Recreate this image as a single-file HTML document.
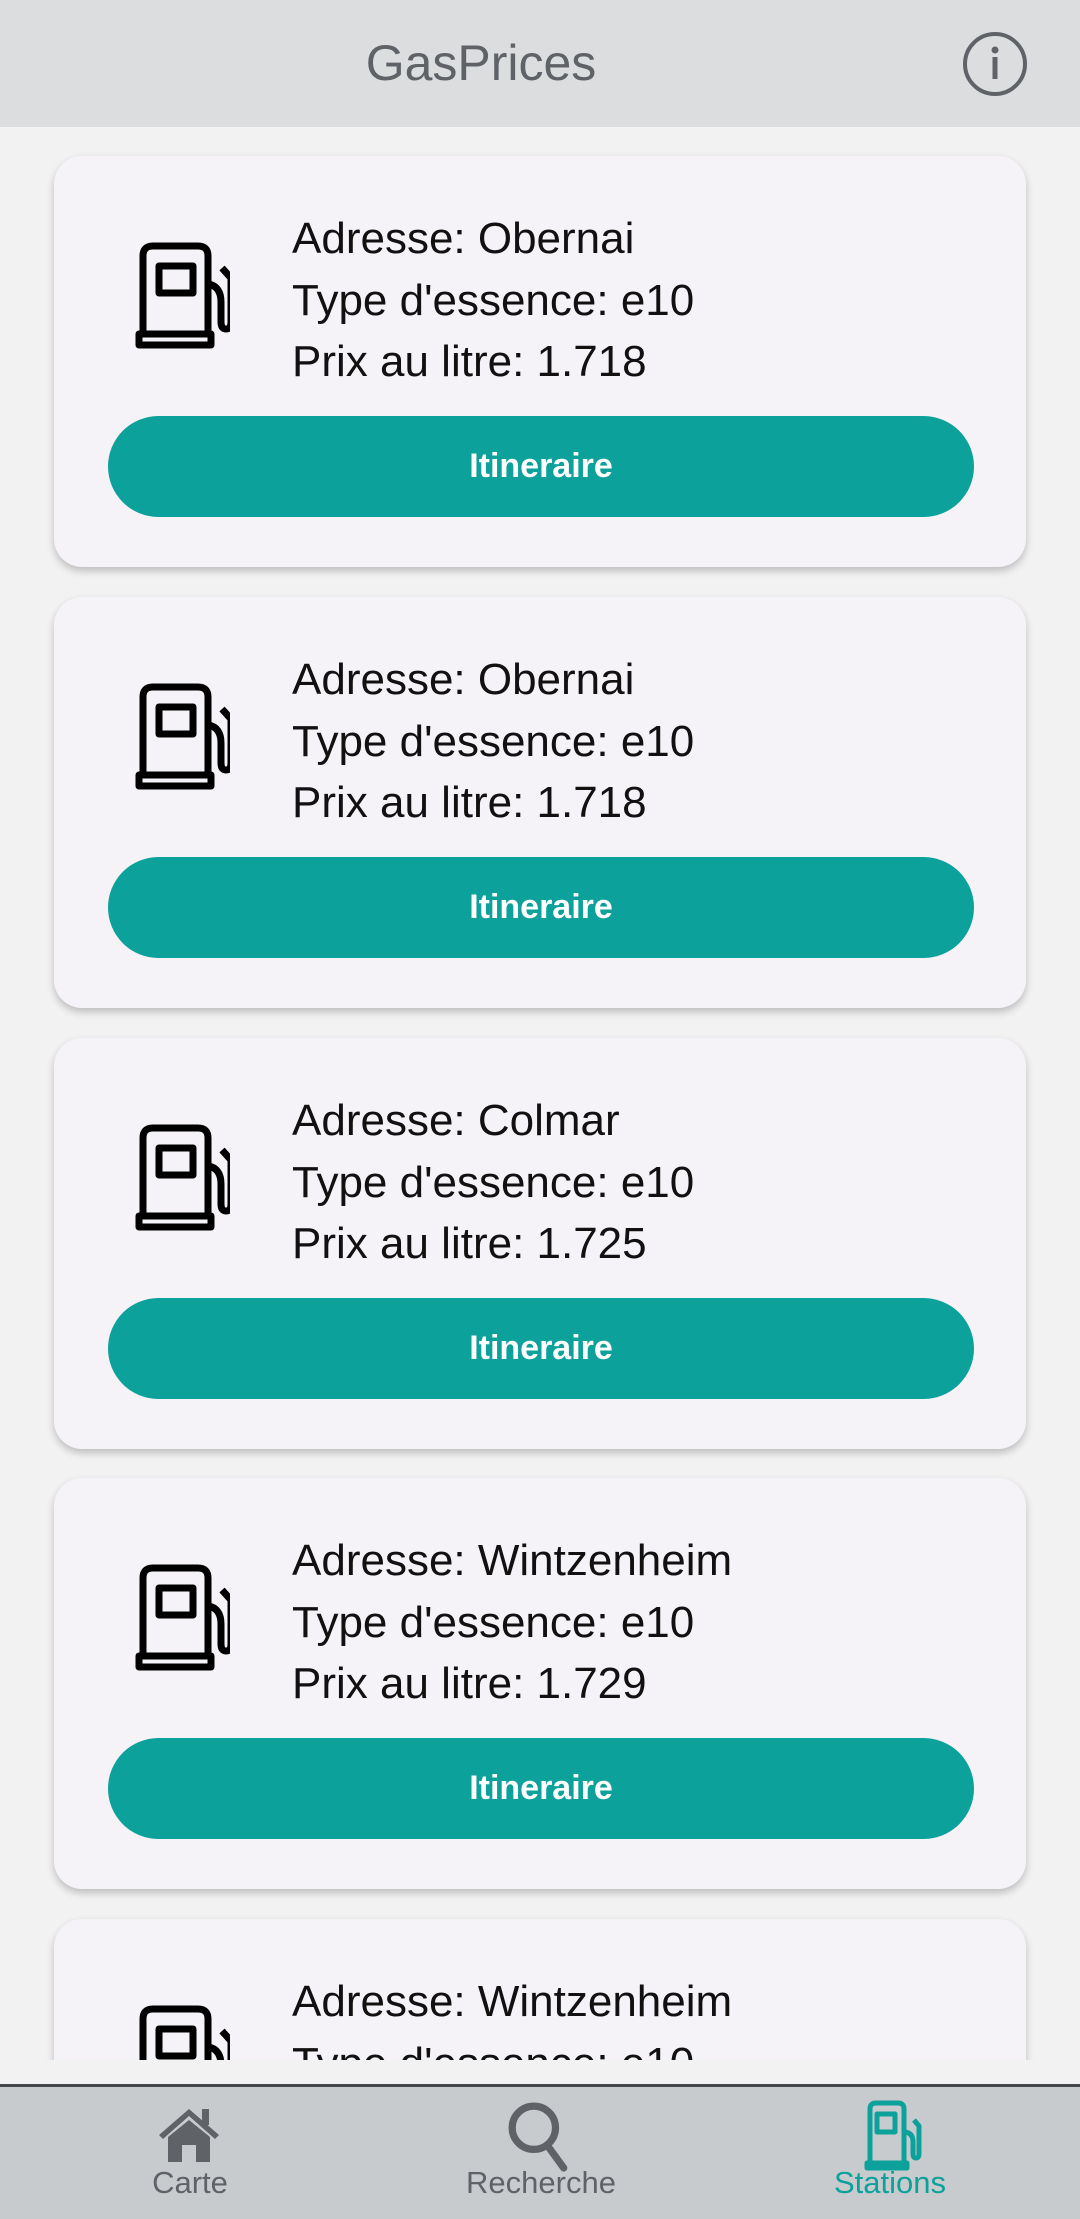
<!DOCTYPE html>
<html><head><meta charset="utf-8"><style>
*{margin:0;padding:0;box-sizing:border-box}
html,body{width:1080px;height:2219px;overflow:hidden}
body{background:#f2f2f2;font-family:"Liberation Sans",Roboto,sans-serif;position:relative}
.hdr{position:absolute;left:0;top:0;width:1080px;height:127px;background:#dcdddf}
.title{position:absolute;left:0;width:962px;text-align:center;top:34px;font-size:50px;color:#5f6368}
.list{position:absolute;left:0;top:127px;width:1080px;height:1933px;overflow:hidden}
.card{position:absolute;left:54px;width:972px;height:411px;background:#f6f3f8;border-radius:28px;box-shadow:0 4px 8px rgba(0,0,0,.22)}
.card svg{position:absolute;left:66px;top:74px}
.txt{position:absolute;left:238px;top:52px;font-size:44px;line-height:61.5px;color:#111}
.btn{position:absolute;left:54px;top:260px;width:866px;height:101px;background:#0ca19a;border-radius:51px;color:#fff;font-weight:bold;font-size:34px;text-align:center;line-height:101px}
.nav{position:absolute;left:0;top:2084px;width:1080px;height:135px;background:#c8cbce;border-top:3px solid #44484c;overflow:hidden}
.lab{position:absolute;top:78px;font-size:31px;color:#5f6368;width:300px;text-align:center}
</style></head><body>
<div class="hdr"><div class="title">GasPrices</div>
<svg style="position:absolute;left:962px;top:31px" width="66" height="66" viewBox="0 0 66 66"><circle cx="33" cy="33" r="30" fill="none" stroke="#5f6368" stroke-width="4"/><circle cx="33" cy="19" r="3.5" fill="#5f6368"/><rect x="30.5" y="26" width="5" height="22" fill="#5f6368"/></svg></div>
<div class="list">
<div class="card" style="top:29px"><svg width="110" height="120" viewBox="0 0 110 120"><g fill="none" stroke="#000" stroke-width="7" stroke-linejoin="round"><path d="M23 102V26q0-10 10-10h45q10 0 10 10v76"/><path d="M19 104h72v11H19z"/><rect x="39" y="36" width="34" height="27"/><path d="M88 54q13 2 13 18v20q0 7 5 7t5-7V48l-9-10"/></g></svg><div class="txt">Adresse: Obernai<br>Type d'essence: e10<br>Prix au litre: 1.718</div><div class="btn">Itineraire</div></div>
<div class="card" style="top:470px"><svg width="110" height="120" viewBox="0 0 110 120"><g fill="none" stroke="#000" stroke-width="7" stroke-linejoin="round"><path d="M23 102V26q0-10 10-10h45q10 0 10 10v76"/><path d="M19 104h72v11H19z"/><rect x="39" y="36" width="34" height="27"/><path d="M88 54q13 2 13 18v20q0 7 5 7t5-7V48l-9-10"/></g></svg><div class="txt">Adresse: Obernai<br>Type d'essence: e10<br>Prix au litre: 1.718</div><div class="btn">Itineraire</div></div>
<div class="card" style="top:911px"><svg width="110" height="120" viewBox="0 0 110 120"><g fill="none" stroke="#000" stroke-width="7" stroke-linejoin="round"><path d="M23 102V26q0-10 10-10h45q10 0 10 10v76"/><path d="M19 104h72v11H19z"/><rect x="39" y="36" width="34" height="27"/><path d="M88 54q13 2 13 18v20q0 7 5 7t5-7V48l-9-10"/></g></svg><div class="txt">Adresse: Colmar<br>Type d'essence: e10<br>Prix au litre: 1.725</div><div class="btn">Itineraire</div></div>
<div class="card" style="top:1351px"><svg width="110" height="120" viewBox="0 0 110 120"><g fill="none" stroke="#000" stroke-width="7" stroke-linejoin="round"><path d="M23 102V26q0-10 10-10h45q10 0 10 10v76"/><path d="M19 104h72v11H19z"/><rect x="39" y="36" width="34" height="27"/><path d="M88 54q13 2 13 18v20q0 7 5 7t5-7V48l-9-10"/></g></svg><div class="txt">Adresse: Wintzenheim<br>Type d'essence: e10<br>Prix au litre: 1.729</div><div class="btn">Itineraire</div></div>
<div class="card" style="top:1792px"><svg width="110" height="120" viewBox="0 0 110 120"><g fill="none" stroke="#000" stroke-width="7" stroke-linejoin="round"><path d="M23 102V26q0-10 10-10h45q10 0 10 10v76"/><path d="M19 104h72v11H19z"/><rect x="39" y="36" width="34" height="27"/><path d="M88 54q13 2 13 18v20q0 7 5 7t5-7V48l-9-10"/></g></svg><div class="txt">Adresse: Wintzenheim<br>Type d'essence: e10<br>Prix au litre: 1.729</div><div class="btn">Itineraire</div></div>
</div>
<div class="nav">
<svg style="position:absolute;left:157px;top:20px" width="64" height="56" viewBox="0 0 62 56"><path d="M1 28L31 2l30 26-4 4L31 9 5 32z" fill="#5f6368"/><rect x="44" y="2" width="7" height="16" fill="#5f6368"/><path d="M10 30L31 13l21 17v25H38V38H24v17H10z" fill="#5f6368"/></svg>
<svg style="position:absolute;left:506px;top:12px" width="66" height="74" viewBox="0 0 64 70"><circle cx="27" cy="27" r="21" fill="none" stroke="#5f6368" stroke-width="7"/><path d="M40 44l16 22" stroke="#5f6368" stroke-width="7" stroke-linecap="round"/></svg>
<svg style="position:absolute;left:862px;top:12px" width="62" height="72" viewBox="0 0 62 70"><g fill="none" stroke="#0ca19a" stroke-width="5" stroke-linejoin="round"><path d="M8 62V9q0-6 6-6h22q6 0 6 6v53"/><path d="M5 63h40v5H5z"/><rect x="15" y="14" width="18" height="18"/><path d="M43 32q8 1 8 10v12q0 4 3 4t3-4V26l-5-6"/></g></svg>
<div class="lab" style="left:40px">Carte</div>
<div class="lab" style="left:391px">Recherche</div>
<div class="lab" style="left:740px;color:#0ca19a">Stations</div>
</div>
</body></html>
